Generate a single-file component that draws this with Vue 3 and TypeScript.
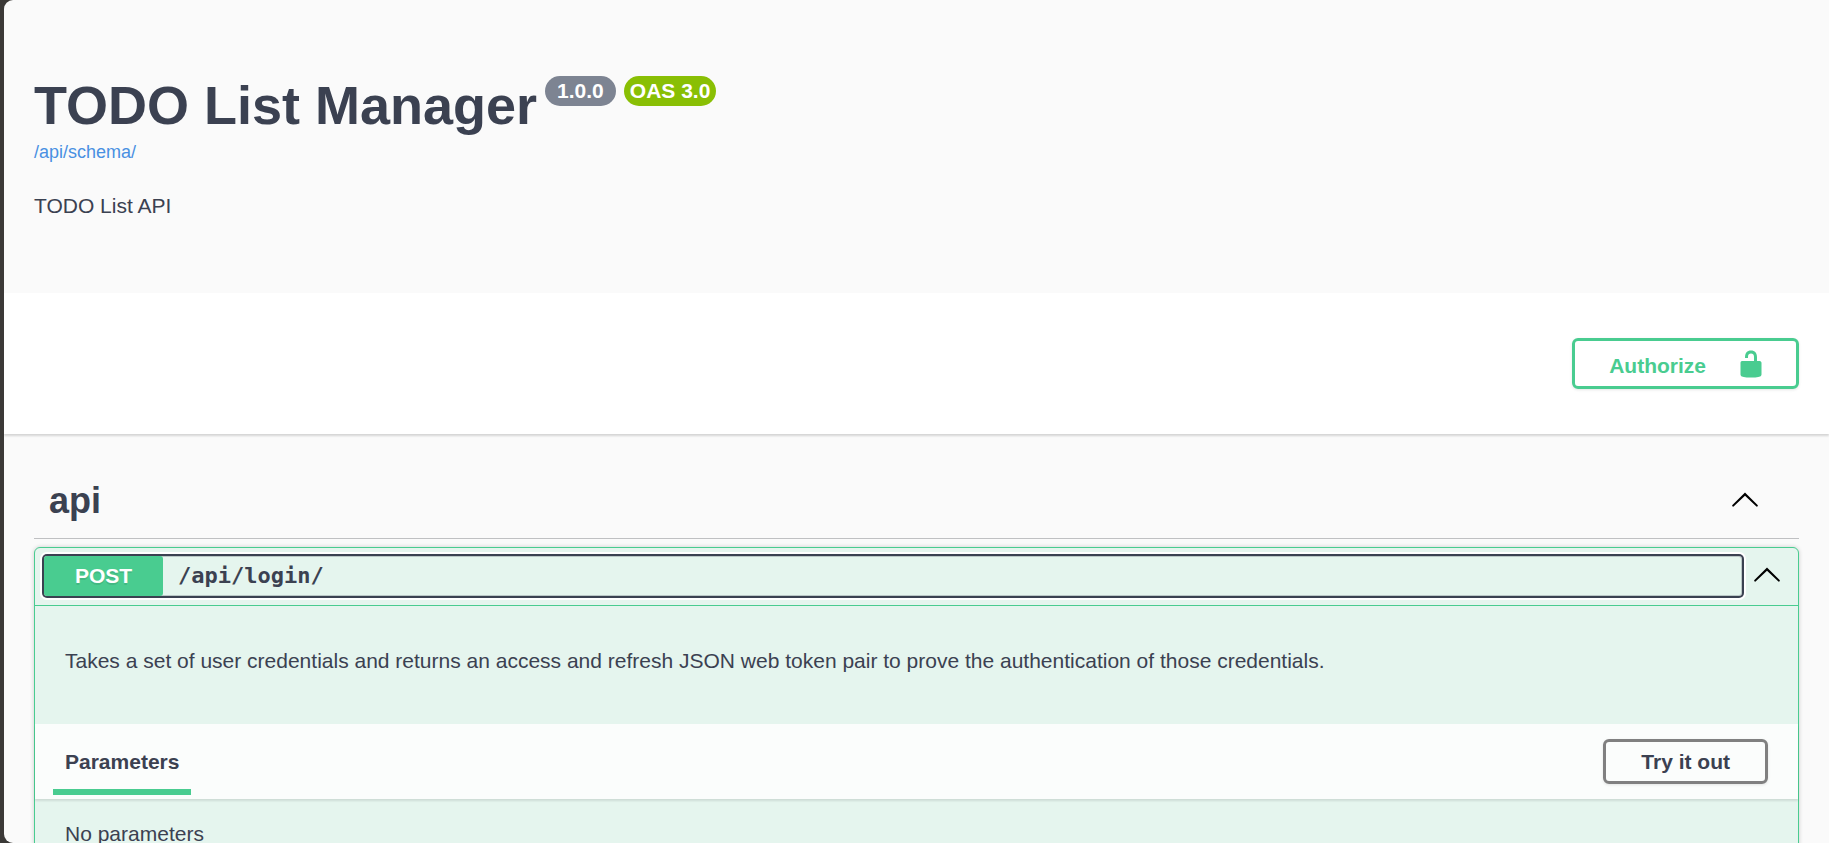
<script setup lang="ts">
import { ref } from 'vue'

interface Operation {
  method: string
  path: string
  description: string
}

const info = {
  title: 'TODO List Manager',
  version: '1.0.0',
  oas: 'OAS 3.0',
  schema: '/api/schema/',
  description: 'TODO List API',
}

const operation: Operation = {
  method: 'POST',
  path: '/api/login/',
  description:
    'Takes a set of user credentials and returns an access and refresh JSON web token pair to prove the authentication of those credentials.',
}

const tagOpen = ref(true)
const operationOpen = ref(true)

const arrow =
  'M17.418 14.908c.272.268.709.268.979 0s.271-.701 0-.969l-7.908-7.83c-.27-.268-.707-.268-.979 0l-7.908 7.83c-.27.268-.27.701 0 .969.271.268.709.268.979 0L10 7.767l7.418 7.141z'
const unlocked =
  'M15.8 8H14V5.6C14 2.703 12.665 1 10 1 7.334 1 6 2.703 6 5.6V6h2v-.801C8 3.754 8.797 3 10 3c1.203 0 2 .754 2 2.199V8H4c-.553 0-1 .646-1 1.199V17c0 .549.428 1.139.951 1.307l1.197.387C5.672 18.861 6.55 19 7.1 19h5.8c.549 0 1.428-.139 1.951-.307l1.196-.387c.524-.167.953-.757.953-1.306V9.199C17 8.646 16.352 8 15.8 8z'
</script>

<template>
  <div class="frame">
    <main class="page">
      <header class="info">
        <div class="heading">
          <h1>{{ info.title }}</h1>
          <span class="badge version">{{ info.version }}</span>
          <span class="badge oas">{{ info.oas }}</span>
        </div>
        <a class="schema" href="/api/schema/">{{ info.schema }}</a>
        <p class="about">{{ info.description }}</p>
      </header>

      <section class="schemes">
        <button class="authorize" type="button">
          <span>Authorize</span>
          <svg class="icon" viewBox="0 0 20 20" aria-hidden="true"><path :d="unlocked" /></svg>
        </button>
      </section>

      <section class="operations">
        <div class="tag">
          <h2>api</h2>
          <button class="toggle" type="button" aria-label="Collapse api" :aria-expanded="tagOpen" @click="tagOpen = !tagOpen">
            <svg class="icon" :class="{ flipped: !tagOpen }" viewBox="0 0 20 20" aria-hidden="true"><path :d="arrow" /></svg>
          </button>
        </div>

        <article v-if="tagOpen" class="block">
          <div class="summary">
            <button class="control" type="button" :aria-expanded="operationOpen" @click="operationOpen = !operationOpen">
              <span class="method">{{ operation.method }}</span>
              <span class="path">{{ operation.path }}</span>
            </button>
            <button class="toggle" type="button" aria-label="Collapse operation" @click="operationOpen = !operationOpen">
              <svg class="icon" :class="{ flipped: !operationOpen }" viewBox="0 0 20 20" aria-hidden="true"><path :d="arrow" /></svg>
            </button>
          </div>
          <template v-if="operationOpen">
            <p class="description">{{ operation.description }}</p>
            <div class="section-header">
              <h3>Parameters</h3>
              <button class="try" type="button">Try it out</button>
            </div>
            <p class="empty">No parameters</p>
          </template>
        </article>
      </section>
    </main>
  </div>
</template>

<style>
body {
  margin: 0;
  background: #3b3937;
}
</style>

<style scoped>
.frame {
  box-sizing: border-box;
  height: 100vh;
  padding-left: 4px;
  background: #3b3937;
  color: #3b4151;
  font-family: "Liberation Sans", Arial, sans-serif;
  font-size: 21px;
  line-height: 24px;
}

.page {
  height: 100%;
  overflow-y: auto;
  scrollbar-width: none;
  border-radius: 9px 0 0 9px;
  background: #fafafa;
}

h1,
h2,
h3,
p {
  margin: 0;
}

button {
  margin: 0;
  font: inherit;
  color: inherit;
  cursor: pointer;
}

.icon {
  display: block;
  width: 30px;
  height: 30px;
  fill: currentColor;
}

.flipped {
  transform: rotate(180deg);
}

.info {
  padding: 75px 30px;
}

.heading {
  display: flex;
  align-items: flex-start;
  gap: 8px;
}

h1 {
  font-size: 54px;
  line-height: 60px;
}

.badge {
  margin-top: 1px;
  border-radius: 15px;
  color: #fff;
  font-weight: 700;
  line-height: 30px;
}

.version {
  padding: 0 12px;
  background: #7d8492;
}

.oas {
  padding: 0 6px;
  background: #89bf04;
}

.schema {
  display: block;
  width: fit-content;
  margin-top: 7px;
  color: #4990e2;
  font-size: 18px;
  line-height: 20px;
  text-decoration: none;
}

.about {
  margin-top: 32px;
}

.schemes {
  display: flex;
  justify-content: flex-end;
  padding: 45px 30px;
  background: #fff;
  box-shadow: 0 2px 2px rgba(0, 0, 0, 0.15);
}

.authorize {
  display: flex;
  align-items: center;
  gap: 30px;
  height: 51px;
  padding: 0 30px 0 34px;
  border: 3px solid #49cc90;
  border-radius: 6px;
  background: transparent;
  box-shadow: 0 1px 3px rgba(0, 0, 0, 0.1);
  color: #49cc90;
  font-weight: 700;
}

.authorize span {
  padding-top: 4px;
}

.operations {
  padding: 30px 30px 45px;
}

.tag {
  display: flex;
  align-items: center;
  justify-content: space-between;
  height: 74px;
  padding: 0 39px 0 15px;
  border-bottom: 1px solid #bfc0c2;
}

h2 {
  font-size: 36px;
  line-height: 42px;
}

.toggle {
  padding: 0 0 4px;
  border: 0;
  background: none;
  color: #000;
}

.block {
  margin-top: 8px;
  border: 1px solid #49cc90;
  border-radius: 6px;
  background: #e5f5ee;
  box-shadow: 0 0 4px rgba(0, 0, 0, 0.19);
}

.summary {
  display: flex;
  align-items: center;
  gap: 10px;
  padding: 8px 16px 9px 9px;
  border-bottom: 1px solid #49cc90;
}

.control {
  display: flex;
  flex: 1;
  align-items: center;
  gap: 15px;
  height: 40px;
  padding: 0;
  border: 0;
  border-radius: 3px;
  background: transparent;
  box-shadow: inset 0 0 0 1px rgba(59, 65, 81, 0.25), 0 0 0 2px #3b4151, 0 0 0 4px #fff;
}

.method {
  width: 119px;
  border-radius: 3px;
  background: #49cc90;
  color: #fff;
  font-weight: 700;
  line-height: 40px;
  text-align: center;
  text-shadow: 0 2px 0 rgba(0, 0, 0, 0.1);
}

.path {
  font-family: "DejaVu Sans Mono", Consolas, monospace;
  font-size: 22px;
  font-weight: 700;
}

.description {
  padding: 43px 30px 51px;
}

.section-header {
  display: flex;
  align-items: flex-start;
  justify-content: space-between;
  padding: 15px 30px 4px 18px;
  background: #fbfdfc;
  box-shadow: 0 2px 2px rgba(0, 0, 0, 0.1);
}

h3 {
  padding: 11px 12px 15px;
  border-bottom: 6px solid #49cc90;
  font-size: 21px;
}

.try {
  height: 45px;
  padding: 0 35px;
  border: 3px solid #808080;
  border-radius: 6px;
  background: transparent;
  box-shadow: 0 1px 3px rgba(0, 0, 0, 0.1);
  font-weight: 700;
}

.empty {
  padding: 23px 30px;
}
</style>
